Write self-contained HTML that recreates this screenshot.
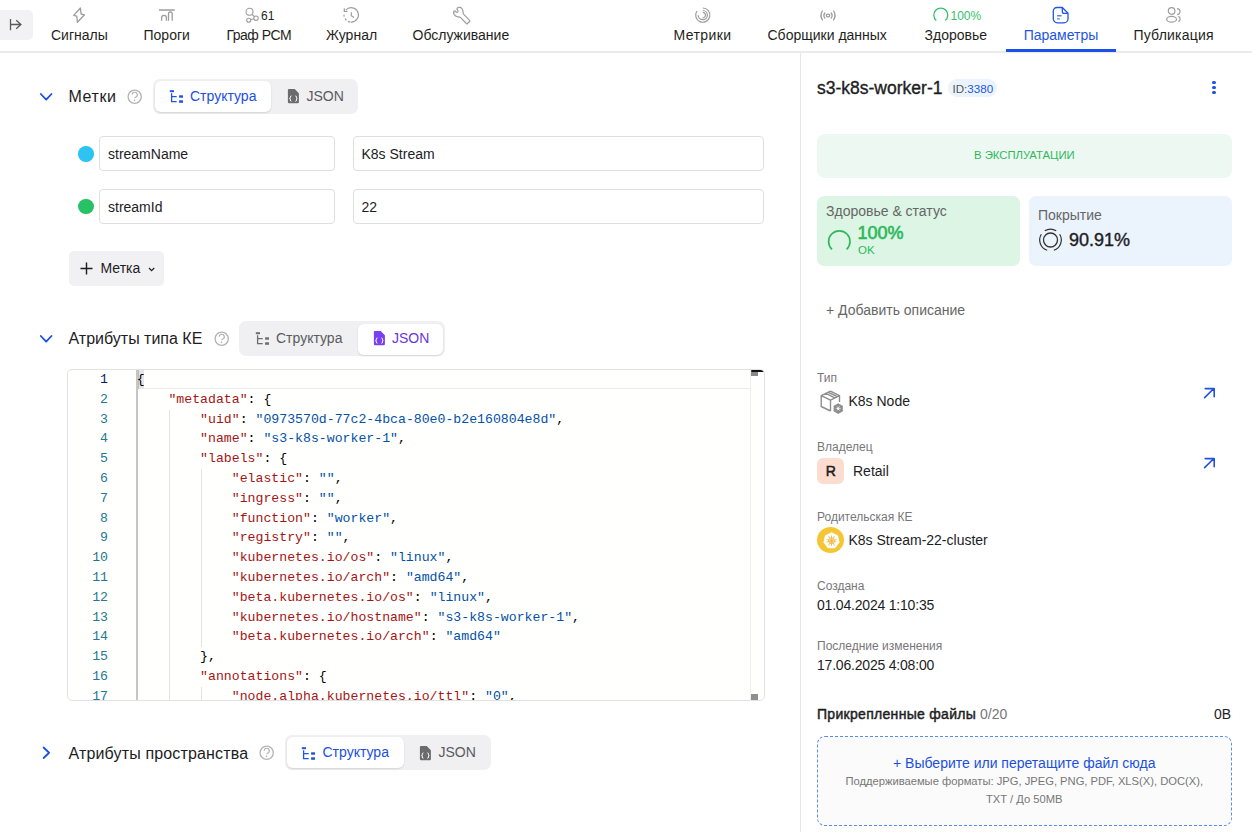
<!DOCTYPE html>
<html><head><meta charset="utf-8">
<style>
*{box-sizing:border-box;margin:0;padding:0}
html,body{width:1252px;height:832px;overflow:hidden;background:#fff;font-family:"Liberation Sans",sans-serif;color:#1d1d1f}
.a{position:absolute}
.t{position:absolute;white-space:nowrap;line-height:1}
svg{position:absolute;overflow:visible}
/* header */
#hdr{position:absolute;left:0;top:0;width:1252px;height:53px;border-bottom:2px solid #ebebed}
.nav{font-size:14px;color:#1f1f21}
.seg{position:absolute;height:35px;background:#f0f0f3;border-radius:7px}
.segon{position:absolute;top:2px;height:31px;background:#fff;border-radius:6px;box-shadow:0 1px 2px rgba(0,0,0,.12)}
.inp{position:absolute;height:35px;border:1px solid #dedee0;border-radius:4px;background:#fff}
.mono{font-family:"Liberation Mono",monospace;font-size:13.2px;line-height:19.8px;white-space:pre}
.k{color:#a31515}.s{color:#0451a5}
.lbl{font-size:12px;color:#77777a}
.val{font-size:14px;color:#1d1d1f}
</style></head><body>

<!-- ============ HEADER ============ -->
<div id="hdr"></div>
<div class="a" style="left:0;top:10px;width:33px;height:30px;background:#f2f2f4;border-radius:0 5px 5px 0"></div>
<svg style="left:8px;top:17px" width="16" height="16" viewBox="0 0 16 16"><path d="M2.5 2.1V13.3M2.5 7.5H12.9M8.2 3.3L12.9 7.5L8.2 11.8" fill="none" stroke="#58585b" stroke-width="1.3"/></svg>

<!-- left nav -->
<svg style="left:72px;top:7px" width="14" height="16" viewBox="0 0 14 16"><path d="M8.4 1L9.1 7L12.5 7.8L5.4 15.3L4.8 9.2L1.7 8.4Z" fill="none" stroke="#9d9d9f" stroke-width="1.3" stroke-linejoin="round"/></svg>
<div class="t nav" style="left:51px;top:28px">Сигналы</div>

<svg style="left:158px;top:8px" width="18" height="14" viewBox="0 0 18 14"><path d="M1 2H16.8" stroke="#9d9d9f" stroke-width="1.5"/><path d="M3.6 12.7V9.8A2.4 2.4 0 0 1 8.4 9.8V12.7M10.5 12.7V5.5A1.5 1.5 0 0 1 12 4H12.7A1.5 1.5 0 0 1 14.2 5.5V12.7" fill="none" stroke="#9d9d9f" stroke-width="1.3"/></svg>
<div class="t nav" style="left:143.5px;top:28px">Пороги</div>

<svg style="left:244px;top:7px" width="16" height="17" viewBox="0 0 16 17"><g fill="none" stroke="#9d9d9f" stroke-width="1.1"><circle cx="5.5" cy="4.8" r="3.5"/><circle cx="4.7" cy="13.3" r="2"/><circle cx="12" cy="11.2" r="2.2"/><path d="M8 7.3L10.3 9.5M6.7 12.7L9.8 11.8"/></g></svg>
<div class="t" style="left:261px;top:9.8px;font-size:12px;color:#1f1f21">61</div>
<div class="t nav" style="left:226.5px;top:28px;letter-spacing:-0.5px">Граф РСМ</div>

<svg style="left:342px;top:5px" width="20" height="20" viewBox="0 0 20 20"><g fill="none" stroke="#9d9d9f" stroke-width="1.2"><path d="M3.85 5.08A7.2 7.2 0 1 1 8.57 17.07"/><path d="M7.95 16.99A7.2 7.2 0 0 1 2.03 9.27" stroke-dasharray="2 2"/><path d="M2.3 3.2V6.5H5.6M9.3 7.3V10.75L12 12.5"/></g></svg>
<div class="t nav" style="left:326px;top:28px">Журнал</div>

<svg style="left:446px;top:4px" width="30" height="24" viewBox="0 0 30 24"><path d="M11.2 4.2C12.5 2.8 15.5 3.2 16.5 5.5C17.2 7 17 8.5 17.3 9.8L23.6 16.3C24 16.7 24 17.1 23.6 17.5L21.5 19.5C21.1 19.9 20.7 19.9 20.3 19.5L14.2 13.2C12.8 12.6 11 13 9.6 12C7.8 10.8 7.3 8.8 7.8 7.3C8.3 6.9 9.2 6.9 9.8 7.6C10.5 8.4 11.5 8.6 12 7.8C12.4 7 11.8 6.2 11.3 5.8C10.9 5.3 10.9 4.6 11.2 4.2Z" fill="none" stroke="#9d9d9f" stroke-width="1.2" stroke-linejoin="round"/></svg>
<div class="t nav" style="left:412.5px;top:28px">Обслуживание</div>

<!-- right nav -->
<svg style="left:694px;top:6px" width="18" height="18" viewBox="0 0 18 18"><g fill="none" stroke="#9d9d9f" stroke-width="1.2"><path d="M8.80 2.00A7.1 7.1 0 1 1 2.98 5.03"/><path d="M8.80 4.50A4.6 4.6 0 1 1 4.20 9.26"/><path d="M8.80 6.40A2.7 2.7 0 1 1 8.56 11.79"/></g></svg>
<div class="t nav" style="left:673.5px;top:28px;letter-spacing:0.4px">Метрики</div>

<svg style="left:818px;top:9px" width="20" height="14" viewBox="0 0 20 14"><g fill="none" stroke="#9d9d9f" stroke-width="1.3" stroke-linecap="round"><ellipse cx="10" cy="6.5" rx="1.7" ry="1.4"/><path d="M6.8 4Q4.9 6.5 6.8 9M13.2 4Q15.1 6.5 13.2 9M4.4 2Q1.5 6.5 4.4 11M15.6 2Q18.5 6.5 15.6 11"/></g></svg>
<div class="t nav" style="left:767.5px;top:28px">Сборщики данных</div>

<svg style="left:932px;top:7px" width="18" height="16" viewBox="0 0 18 16"><path d="M4.3 13.4A7 7 0 1 1 13.3 13.4" fill="none" stroke="#34c26b" stroke-width="1.3"/></svg>
<div class="t" style="left:950.5px;top:9.5px;font-size:12px;color:#34c26b">100%</div>
<div class="t nav" style="left:924.5px;top:28px">Здоровье</div>

<svg style="left:1052px;top:6px" width="18" height="18" viewBox="0 0 18 18"><g fill="none" stroke="#1f55e3" stroke-width="1.3" stroke-linejoin="round"><path d="M5 1.5H10.3L16 7.3V12.8A4 4 0 0 1 12 16.8H5.3A4 4 0 0 1 1.3 12.8V5.2A3.7 3.7 0 0 1 5 1.5Z"/><path d="M10.3 1.8V5.4A2 2 0 0 0 12.3 7.4H15.8"/></g><path d="M5.1 9.75H9.6M5.1 12.9H7.9" stroke="#5b80e8" stroke-width="1.4"/></svg>
<div class="t nav" style="left:1023.7px;top:28px;color:#1f55e3">Параметры</div>
<div class="a" style="left:1006px;top:49px;width:110px;height:2.5px;background:#1d4fea"></div>

<svg style="left:1164px;top:5px" width="20" height="20" viewBox="0 0 20 20"><g fill="none" stroke="#9d9d9f" stroke-width="1.2"><circle cx="7.6" cy="6" r="3.3"/><ellipse cx="7.6" cy="14.25" rx="4.9" ry="2.9"/><path d="M13 3.6A2.9 2.9 0 0 1 13 9.6M14.4 11.3A3.5 3.2 0 0 1 14.4 16.8"/></g></svg>
<div class="t nav" style="left:1133.5px;top:28px;letter-spacing:0.2px">Публикация</div>


<!-- ============ LEFT: Метки ============ -->
<svg style="left:39px;top:91.5px" width="14" height="10" viewBox="0 0 14 10"><path d="M1.8 2l5.4 5.6 5.3-5.6" fill="none" stroke="#1a50e6" stroke-width="1.8" stroke-linecap="round" stroke-linejoin="round"/></svg>
<div class="t" style="left:68.5px;top:88.5px;font-size:16px;color:#1d1d1f;letter-spacing:0.6px">Метки</div>
<svg style="left:127px;top:89px" width="16" height="16" viewBox="0 0 16 16"><circle cx="7.7" cy="7.75" r="6.6" fill="none" stroke="#b3b3b6" stroke-width="1.3"/><path d="M5.2 5.8A2.55 2.55 0 1 1 8.6 8.2Q7.6 8.7 7.6 9.3" fill="none" stroke="#b3b3b6" stroke-width="1.2"/><circle cx="7.55" cy="11.4" r="0.8" fill="#b3b3b6"/></svg>
<div class="seg" style="left:153px;top:78.5px;width:205px"></div>
<div class="segon" style="left:155px;top:80.5px;width:116px"></div>
<svg style="left:169px;top:90px" width="15" height="14" viewBox="0 0 15 14"><rect x="0.8" y="0.2" width="4.2" height="2" fill="#1f55e3"/><path d="M2.6 3.2V11.7H7.7M2.6 6.6H7.7" fill="none" stroke="#1f55e3" stroke-width="1.3"/><rect x="10.1" y="5.3" width="3.9" height="2.4" fill="#1f55e3"/><rect x="10.1" y="10.3" width="3.9" height="2.5" fill="#1f55e3"/></svg>
<div class="t" style="left:190px;top:88.5px;font-size:14px;color:#1b4fdf">Структура</div>
<svg style="left:287px;top:88px" width="13" height="16" viewBox="0 0 13 16"><path d="M1.9 1H7.7L11.9 5.2V14A1.2 1.2 0 0 1 10.7 15.2H2.1A1.2 1.2 0 0 1 0.9 14V2A1 1 0 0 1 1.9 1Z" fill="#6b6b6e"/><path d="M4.4 7.9Q3.3 7.9 3.3 9.2V10Q3.3 10.6 2.6 10.6Q3.3 10.6 3.3 11.2V12Q3.3 13.3 4.4 13.3M8.4 7.9Q9.5 7.9 9.5 9.2V10Q9.5 10.6 10.2 10.6Q9.5 10.6 9.5 11.2V12Q9.5 13.3 8.4 13.3" fill="none" stroke="#fff" stroke-width="1"/></svg>
<div class="t" style="left:306.5px;top:88.5px;font-size:14px;color:#5a5a5e">JSON</div>

<div class="a" style="left:78px;top:146px;width:15.5px;height:15.5px;border-radius:50%;background:#2ec3f0"></div>
<div class="inp" style="left:99px;top:136px;width:236px"></div>
<div class="t" style="left:108px;top:147px;font-size:14px">streamName</div>
<div class="inp" style="left:353px;top:136px;width:411px"></div>
<div class="t" style="left:361.5px;top:147px;font-size:14px">K8s Stream</div>

<div class="a" style="left:78px;top:198.5px;width:15.5px;height:15.5px;border-radius:50%;background:#28c266"></div>
<div class="inp" style="left:99px;top:189px;width:236px"></div>
<div class="t" style="left:108px;top:200px;font-size:14px">streamId</div>
<div class="inp" style="left:353px;top:189px;width:411px"></div>
<div class="t" style="left:361.5px;top:200px;font-size:14px">22</div>

<div class="a" style="left:68.5px;top:251px;width:95.5px;height:35px;background:#f1f1f3;border-radius:5px"></div>
<svg style="left:79.5px;top:262px" width="13" height="13" viewBox="0 0 13 13"><path d="M6.5 0.5v12M0.5 6.5h12" stroke="#1d1d1f" stroke-width="1.4"/></svg>
<div class="t" style="left:100.5px;top:261px;font-size:14px">Метка</div>
<svg style="left:147.5px;top:266.5px" width="7" height="5" viewBox="0 0 7 5"><path d="M1 1l2.6 2.6L6.2 1" fill="none" stroke="#1d1d1f" stroke-width="1.2"/></svg>

<!-- ============ LEFT: Атрибуты типа КЕ ============ -->
<svg style="left:39px;top:334px" width="14" height="10" viewBox="0 0 14 10"><path d="M1.8 2l5.4 5.6 5.3-5.6" fill="none" stroke="#1a50e6" stroke-width="1.8" stroke-linecap="round" stroke-linejoin="round"/></svg>
<div class="t" style="left:68.5px;top:330.5px;font-size:16px;color:#1d1d1f">Атрибуты типа КЕ</div>
<svg style="left:213.6px;top:331px" width="16" height="16" viewBox="0 0 16 16"><circle cx="7.7" cy="7.75" r="6.6" fill="none" stroke="#b3b3b6" stroke-width="1.3"/><path d="M5.2 5.8A2.55 2.55 0 1 1 8.6 8.2Q7.6 8.7 7.6 9.3" fill="none" stroke="#b3b3b6" stroke-width="1.2"/><circle cx="7.55" cy="11.4" r="0.8" fill="#b3b3b6"/></svg>
<div class="seg" style="left:238.5px;top:321px;width:206px"></div>
<div class="segon" style="left:358px;top:323.5px;width:84.5px"></div>
<svg style="left:254.6px;top:332.3px" width="15" height="14" viewBox="0 0 15 14"><rect x="0.8" y="0.2" width="4.2" height="2" fill="#6d6d70"/><path d="M2.6 3.2V11.7H7.7M2.6 6.6H7.7" fill="none" stroke="#6d6d70" stroke-width="1.3"/><rect x="10.1" y="5.3" width="3.9" height="2.4" fill="#6d6d70"/><rect x="10.1" y="10.3" width="3.9" height="2.5" fill="#6d6d70"/></svg>
<div class="t" style="left:276px;top:330.5px;font-size:14px;color:#5a5a5e">Структура</div>
<svg style="left:373px;top:330.3px" width="13" height="16" viewBox="0 0 13 16"><path d="M1.9 1H7.7L11.9 5.2V14A1.2 1.2 0 0 1 10.7 15.2H2.1A1.2 1.2 0 0 1 0.9 14V2A1 1 0 0 1 1.9 1Z" fill="#7a3ff0"/><path d="M4.4 7.9Q3.3 7.9 3.3 9.2V10Q3.3 10.6 2.6 10.6Q3.3 10.6 3.3 11.2V12Q3.3 13.3 4.4 13.3M8.4 7.9Q9.5 7.9 9.5 9.2V10Q9.5 10.6 10.2 10.6Q9.5 10.6 9.5 11.2V12Q9.5 13.3 8.4 13.3" fill="none" stroke="#fff" stroke-width="1"/></svg>
<div class="t" style="left:392px;top:330.5px;font-size:14px;color:#6a35e0">JSON</div>


<!-- ============ CODE EDITOR ============ -->
<div class="a" style="left:67px;top:368.5px;width:698px;height:332.5px;border:1px solid #e2e2e4;border-radius:5px;background:#fffffe;overflow:hidden">
  <div class="a mono" style="left:0;top:0.5px;width:40px;text-align:right;color:#237893"><div style="color:#0b216f">1</div><div style="">2</div><div style="">3</div><div style="">4</div><div style="">5</div><div style="">6</div><div style="">7</div><div style="">8</div><div style="">9</div><div style="">10</div><div style="">11</div><div style="">12</div><div style="">13</div><div style="">14</div><div style="">15</div><div style="">16</div><div style="">17</div></div>
  <div class="a" style="left:68.2px;top:0;width:1.5px;height:340px;background:#c6c6c6"></div>
  <div class="a" style="left:69.5px;top:-0.4px;width:612.5px;height:19.9px;border-top:1.2px solid #ebebeb;border-bottom:1.2px solid #ebebeb"></div>
  <div class="a" style="left:69.7px;top:0.2px;width:6.6px;height:19px;background:#e6e6e6;border-left:1px solid #bdbdbd"></div>
  <div class="a" style="left:100.5px;top:40.1px;width:1.2px;height:300px;background:#e3e3e3"></div>
  <div class="a" style="left:132.5px;top:99.5px;width:1.2px;height:178.2px;background:#e3e3e3"></div>
  <div class="a" style="left:132.5px;top:317.3px;width:1.2px;height:30px;background:#e3e3e3"></div>
  <pre class="a mono" style="left:68.8px;top:0.5px;color:#000">{
    <span class="k">"metadata"</span>: {
        <span class="k">"uid"</span>: <span class="s">"0973570d-77c2-4bca-80e0-b2e160804e8d"</span>,
        <span class="k">"name"</span>: <span class="s">"s3-k8s-worker-1"</span>,
        <span class="k">"labels"</span>: {
            <span class="k">"elastic"</span>: <span class="s">""</span>,
            <span class="k">"ingress"</span>: <span class="s">""</span>,
            <span class="k">"function"</span>: <span class="s">"worker"</span>,
            <span class="k">"registry"</span>: <span class="s">""</span>,
            <span class="k">"kubernetes.io/os"</span>: <span class="s">"linux"</span>,
            <span class="k">"kubernetes.io/arch"</span>: <span class="s">"amd64"</span>,
            <span class="k">"beta.kubernetes.io/os"</span>: <span class="s">"linux"</span>,
            <span class="k">"kubernetes.io/hostname"</span>: <span class="s">"s3-k8s-worker-1"</span>,
            <span class="k">"beta.kubernetes.io/arch"</span>: <span class="s">"amd64"</span>
        },
        <span class="k">"annotations"</span>: {
            <span class="k">"node.alpha.kubernetes.io/ttl"</span>: <span class="s">"0"</span>,</pre>
  <div class="a" style="left:681.5px;top:0;width:1px;height:340px;background:#efeff2"></div>
  <div class="a" style="left:682.5px;top:0.5px;width:13.5px;height:1.5px;background:#111;border-radius:1px"></div>
  <div class="a" style="left:682.5px;top:2px;width:7px;height:4px;background:#8a8a8a"></div>
  <div class="a" style="left:682.5px;top:324.5px;width:7px;height:7px;background:#8f8f8f"></div>
</div>

<!-- ============ LEFT: Атрибуты пространства ============ -->
<svg style="left:41px;top:745px" width="10" height="16" viewBox="0 0 10 16"><path d="M2.6 2.5L8.1 7.75L2.6 13" fill="none" stroke="#1a50e6" stroke-width="1.8" stroke-linecap="round" stroke-linejoin="round"/></svg>
<div class="t" style="left:68.5px;top:745.5px;font-size:16px;color:#1d1d1f;letter-spacing:0.15px">Атрибуты пространства</div>
<svg style="left:258.7px;top:745px" width="16" height="16" viewBox="0 0 16 16"><circle cx="7.7" cy="7.75" r="6.6" fill="none" stroke="#b3b3b6" stroke-width="1.3"/><path d="M5.2 5.8A2.55 2.55 0 1 1 8.6 8.2Q7.6 8.7 7.6 9.3" fill="none" stroke="#b3b3b6" stroke-width="1.2"/><circle cx="7.55" cy="11.4" r="0.8" fill="#b3b3b6"/></svg>
<div class="seg" style="left:284.5px;top:735px;width:206px"></div>
<div class="segon" style="left:287px;top:737px;width:116.5px"></div>
<svg style="left:301.3px;top:746.5px" width="15" height="14" viewBox="0 0 15 14"><rect x="0.8" y="0.2" width="4.2" height="2" fill="#1f55e3"/><path d="M2.6 3.2V11.7H7.7M2.6 6.6H7.7" fill="none" stroke="#1f55e3" stroke-width="1.3"/><rect x="10.1" y="5.3" width="3.9" height="2.4" fill="#1f55e3"/><rect x="10.1" y="10.3" width="3.9" height="2.5" fill="#1f55e3"/></svg>
<div class="t" style="left:322.5px;top:744.5px;font-size:14px;color:#1b4fdf">Структура</div>
<svg style="left:418.5px;top:744.5px" width="13" height="16" viewBox="0 0 13 16"><path d="M1.9 1H7.7L11.9 5.2V14A1.2 1.2 0 0 1 10.7 15.2H2.1A1.2 1.2 0 0 1 0.9 14V2A1 1 0 0 1 1.9 1Z" fill="#6b6b6e"/><path d="M4.4 7.9Q3.3 7.9 3.3 9.2V10Q3.3 10.6 2.6 10.6Q3.3 10.6 3.3 11.2V12Q3.3 13.3 4.4 13.3M8.4 7.9Q9.5 7.9 9.5 9.2V10Q9.5 10.6 10.2 10.6Q9.5 10.6 9.5 11.2V12Q9.5 13.3 8.4 13.3" fill="none" stroke="#fff" stroke-width="1"/></svg>
<div class="t" style="left:438.5px;top:744.5px;font-size:14px;color:#5a5a5e">JSON</div>


<!-- ============ RIGHT PANEL ============ -->
<div class="t" style="left:817px;top:79.5px;font-size:17.5px;color:#1d1d1f;-webkit-text-stroke:0.35px #1d1d1f">s3-k8s-worker-1</div>
<div class="a" style="left:948px;top:79px;width:49px;height:18px;background:#ebf3fd;border-radius:9px"></div>
<div class="t" style="left:952.5px;top:82.5px;font-size:11.6px;color:#555"><span>ID:</span><span style="color:#1f58e0">3380</span></div>
<div class="a" style="left:1212.1px;top:80.8px;width:3.6px;height:3.6px;border-radius:50%;background:#1f52e0"></div>
<div class="a" style="left:1212.1px;top:85.8px;width:3.6px;height:3.6px;border-radius:50%;background:#1f52e0"></div>
<div class="a" style="left:1212.1px;top:90.9px;width:3.6px;height:3.6px;border-radius:50%;background:#1f52e0"></div>

<div class="a" style="left:817px;top:134px;width:414.5px;height:43.5px;background:#eef8f2;border-radius:8px"></div>
<div class="t" style="left:974px;top:150px;font-size:11.3px;color:#2eb85c">В ЭКСПЛУАТАЦИИ</div>

<div class="a" style="left:817px;top:195.5px;width:202.5px;height:70.5px;background:#dcf5e4;border-radius:7px"></div>
<div class="t" style="left:826px;top:203.5px;font-size:14px;color:#666">Здоровье &amp; статус</div>
<svg style="left:827px;top:228.5px" width="24" height="24" viewBox="0 0 24 24"><path d="M5 20.3A10.7 10.7 0 1 1 19.6 20.3" fill="none" stroke="#2eb85c" stroke-width="1.7"/></svg>
<div class="t" style="left:857.5px;top:223.5px;font-size:18px;color:#2eb85c;-webkit-text-stroke:0.6px #2eb85c">100%</div>
<div class="t" style="left:858px;top:244.5px;font-size:11.5px;color:#2eb85c">OK</div>

<div class="a" style="left:1029px;top:195.5px;width:202.5px;height:70.5px;background:#ebf3fd;border-radius:7px"></div>
<div class="t" style="left:1038px;top:207.5px;font-size:14px;color:#666">Покрытие</div>
<svg style="left:1038px;top:227.5px" width="25" height="24" viewBox="0 0 25 24"><path d="M6.78 2.84A10.8 10.8 0 0 1 18.22 2.84M21.66 6.28A10.8 10.8 0 0 1 15.84 22.27M9.16 22.27A10.8 10.8 0 0 1 3.34 6.28" fill="none" stroke="#333" stroke-width="1.2"/><circle cx="12.5" cy="12" r="7" fill="none" stroke="#333" stroke-width="1.3"/></svg>
<div class="t" style="left:1069px;top:230.5px;font-size:18px;color:#1d1d1f;-webkit-text-stroke:0.4px #1d1d1f">90.91%</div>

<div class="t" style="left:826px;top:302.5px;font-size:14px;color:#666">+ Добавить описание</div>

<div class="t lbl" style="left:817px;top:371.5px">Тип</div>
<svg style="left:820px;top:390px" width="25" height="25" viewBox="0 0 25 25"><path d="M10.5 1.2L19.5 5.6V12M10.5 1.2L1.2 5.6V16.5L10.5 21M1.2 5.6L10.5 10.2L19.5 5.6M10.5 10.2V21M5.5 3.2L14.8 7.9M8 2L17.2 6.6" fill="none" stroke="#8e8e90" stroke-width="1.4" stroke-linejoin="round"/><g transform="translate(18.2 18.6)"><circle r="3.6" fill="none" stroke="#8e8e90" stroke-width="2.2"/><path d="M0-5.2V5.2M-4.5-2.6L4.5 2.6M-4.5 2.6L4.5-2.6" stroke="#8e8e90" stroke-width="1.8"/><circle r="1.4" fill="#fff"/></g></svg>
<div class="t val" style="left:848.5px;top:394px">K8s Node</div>
<svg style="left:1203px;top:387px" width="13" height="13" viewBox="0 0 13 13"><path d="M1.6 10.6L10.6 1.7M2.2 1.6H11.2V9.8" fill="none" stroke="#1f52e0" stroke-width="1.6" stroke-linecap="round" stroke-linejoin="round"/></svg>

<div class="t lbl" style="left:817px;top:441px">Владелец</div>
<div class="a" style="left:817px;top:457.5px;width:27px;height:26px;background:#fcdccf;border-radius:6px"></div>
<div class="t" style="left:825.8px;top:464px;font-size:14px;color:#1d1d1f;-webkit-text-stroke:0.5px #1d1d1f">R</div>
<div class="t val" style="left:853px;top:463.5px">Retail</div>
<svg style="left:1203px;top:457px" width="13" height="13" viewBox="0 0 13 13"><path d="M1.6 10.6L10.6 1.7M2.2 1.6H11.2V9.8" fill="none" stroke="#1f52e0" stroke-width="1.6" stroke-linecap="round" stroke-linejoin="round"/></svg>

<div class="t lbl" style="left:817px;top:510.5px">Родительская КЕ</div>
<div class="a" style="left:817px;top:527px;width:27px;height:26px;background:#f5c634;border-radius:50%"></div>
<svg style="left:822.5px;top:531.5px" width="17" height="17" viewBox="0 0 17 17"><path d="M8.5 0.3L15 3.5L16.5 10.5L12 16.3H5L0.5 10.5L2 3.5Z" fill="#fff"/><g stroke="#f0b43a" stroke-width="0.8" fill="none"><circle cx="8.5" cy="8.8" r="3"/><path d="M8.5 3.5v10.5M3.5 7.5l10 2.6M13.5 7.5l-10 2.6M5.5 13.5l6-9.5M11.5 13.5l-6-9.5"/></g></svg>
<div class="t val" style="left:848.5px;top:533px">K8s Stream-22-cluster</div>

<div class="t lbl" style="left:817px;top:580px">Создана</div>
<div class="t val" style="left:817px;top:598px;letter-spacing:-0.2px">01.04.2024 1:10:35</div>

<div class="t lbl" style="left:817px;top:640px">Последние изменения</div>
<div class="t val" style="left:817px;top:658px;letter-spacing:-0.2px">17.06.2025 4:08:00</div>

<div class="t" style="left:817px;top:706.5px;font-size:14px;color:#1d1d1f"><span style="-webkit-text-stroke:0.45px #1d1d1f;letter-spacing:0.3px">Прикрепленные файлы</span> <span style="color:#777">0/20</span></div>
<div class="t val" style="left:1214px;top:706.5px">0B</div>

<div class="a" style="left:817px;top:736px;width:414.5px;height:89.5px;border:1.2px dashed #5b8be8;border-radius:8px;background:#fbfbfb"></div>
<div class="t" style="left:817px;top:756px;width:414.5px;text-align:center;font-size:14px;color:#1b4fdf">+ Выберите или перетащите файл сюда</div>
<div class="t" style="left:817px;top:775.5px;width:414.5px;text-align:center;font-size:11.2px;color:#777">Поддерживаемые форматы: JPG, JPEG, PNG, PDF, XLS(X), DOC(X),</div>
<div class="t" style="left:817px;top:793.5px;width:414.5px;text-align:center;font-size:11.2px;color:#777">TXT / До 50MB</div>

<!-- divider -->
<div class="a" style="left:799.5px;top:53px;width:1.5px;height:779px;background:#e6e5e9"></div>

</body></html>
